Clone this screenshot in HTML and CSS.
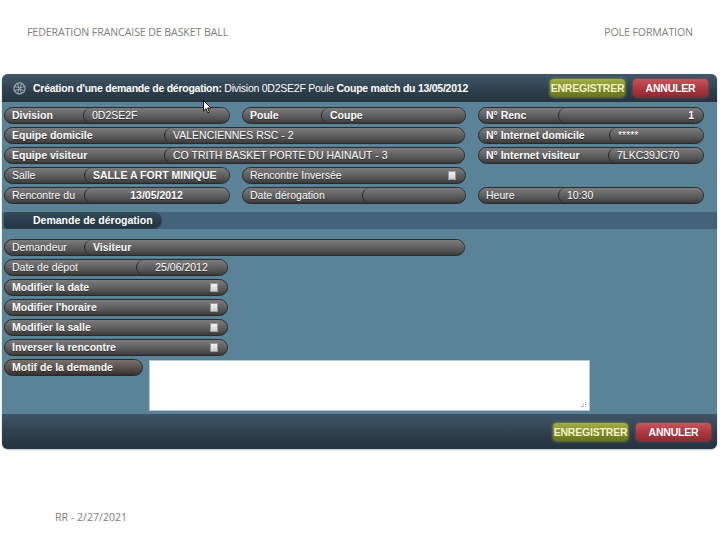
FILE: index.html
```html
<!DOCTYPE html>
<html lang="fr">
<head>
<meta charset="utf-8">
<title>Création d'une demande de dérogation</title>
<link rel="stylesheet" href="styles.css">
</head>
<body>
<div class="slide">
  <div class="top">
    <span>FEDERATION FRANCAISE DE BASKET BALL</span>
    <span>POLE FORMATION</span>
  </div>

  <div class="panel">
    <div class="phead">
      <svg class="logo" width="13" height="13" viewBox="0 0 13 13">
        <circle cx="6.5" cy="6.5" r="5.6" fill="none" stroke="#a9b3ba" stroke-width="1.1"/>
        <path d="M1.5 4.5 Q6.5 7 11.5 4.5 M1.5 8.5 Q6.5 6 11.5 8.5 M4.5 1.3 Q7.5 6.5 4.5 11.7 M8.5 1.3 Q5.5 6.5 8.5 11.7" fill="none" stroke="#a9b3ba" stroke-width="0.9"/>
      </svg>
      <div class="title"><b>Création d'une demande de dérogation:</b> Division 0D2SE2F Poule <b>Coupe match du 13/05/2012</b></div>
      <div class="btns">
        <span class="btn ok">ENREGISTRER</span>
        <span class="btn no">ANNULER</span>
      </div>
    </div>

    <svg class="cursor" width="10" height="14" viewBox="0 0 10 14">
      <path d="M0.5 0.5 L0.5 11 L3 8.6 L4.8 12.8 L6.4 12.1 L4.6 8 L8 8 Z" fill="#fff" stroke="#111" stroke-width="1"/>
    </svg>

    <div class="pbody">
      <div class="grid">
        <div class="pill c1"><span class="lab b w78">Division</span><span class="val">0D2SE2F</span></div>
        <div class="pill c2"><span class="lab b w78">Poule</span><span class="val b">Coupe</span></div>
        <div class="pill c3"><span class="lab b w79">N° Renc</span><span class="val b right">1</span></div>

        <div class="pill span"><span class="lab b w159">Equipe domicile</span><span class="val">VALENCIENNES RSC - 2</span></div>
        <div class="pill c3"><span class="lab b w130">N° Internet domicile</span><span class="val">*****</span></div>

        <div class="pill span"><span class="lab b w159">Equipe visiteur</span><span class="val">CO TRITH BASKET PORTE DU HAINAUT - 3</span></div>
        <div class="pill c3"><span class="lab b w129">N° Internet visiteur</span><span class="val">7LKC39JC70</span></div>

        <div class="pill c1"><span class="lab w79">Salle</span><span class="val b">SALLE A FORT MINIQUE</span></div>
        <div class="pill c2"><span class="lab">Rencontre Inversée</span><span class="chk"></span></div>
        <div class="empty"></div>

        <div class="pill c1"><span class="lab w79">Rencontre du</span><span class="val b center">13/05/2012</span></div>
        <div class="pill c2"><span class="lab w119">Date dérogation</span><span class="val"></span></div>
        <div class="pill c3"><span class="lab w79">Heure</span><span class="val">10:30</span></div>
      </div>

      <div class="section"><span class="tab">Demande de dérogation</span></div>

      <div class="rows">
        <div class="pill wide"><span class="lab w79">Demandeur</span><span class="val b">Visiteur</span></div>
        <div class="pill short"><span class="lab w131">Date de dépot</span><span class="val center">25/06/2012</span></div>
        <div class="pill short"><span class="lab b">Modifier la date</span><span class="chk"></span></div>
        <div class="pill short"><span class="lab b">Modifier l'horaire</span><span class="chk"></span></div>
        <div class="pill short"><span class="lab b">Modifier la salle</span><span class="chk"></span></div>
        <div class="pill short"><span class="lab b">Inverser la rencontre</span><span class="chk"></span></div>
        <div class="motif">
          <div class="pill mini"><span class="lab b">Motif de la demande</span></div>
          <div class="ta">
            <svg class="grip" width="6" height="6" viewBox="0 0 6 6">
              <rect x="4" y="0" width="1" height="1" fill="#999"/>
              <rect x="2" y="2" width="1" height="1" fill="#999"/>
              <rect x="4" y="2" width="1" height="1" fill="#999"/>
              <rect x="0" y="4" width="1" height="1" fill="#999"/>
              <rect x="2" y="4" width="1" height="1" fill="#999"/>
              <rect x="4" y="4" width="1" height="1" fill="#999"/>
            </svg>
          </div>
        </div>
      </div>
    </div>

    <div class="pfoot">
      <span class="btn ok">ENREGISTRER</span>
      <span class="btn no">ANNULER</span>
    </div>
  </div>

  <div class="note">RR - 2/27/2021</div>
</div>
</body>
</html>
```

FILE: styles.css
```css
html, body {
  margin: 0;
  padding: 0;
  background: #ffffff;
}

.slide {
  width: 720px;
  height: 540px;
  overflow: hidden;
}

.top {
  box-sizing: border-box;
  height: 74px;
  display: flex;
  justify-content: space-between;
  padding: 25px 27px 0 27px;
  font-family: "Open Sans", "Liberation Sans", sans-serif;
  font-size: 10.6px;
  color: #808080;
  letter-spacing: -0.1px;
}

.note {
  margin: 61px 0 0 55px;
  font-family: "Open Sans", "Liberation Sans", sans-serif;
  font-size: 10.6px;
  color: #808080;
}

.panel {
  position: relative;
  width: 715px;
  margin-left: 2px;
  background: #5b8398;
  border-radius: 6px;
  box-shadow: 0 1px 2px rgba(0, 0, 0, 0.25);
  font-family: "Liberation Sans", Arial, sans-serif;
  font-size: 10.5px;
  color: #ffffff;
}

.phead {
  height: 28px;
  display: flex;
  align-items: center;
  padding: 0 9px 0 11px;
  background: linear-gradient(#41596a, #2d3e4b 60%, #263540);
  border-radius: 6px 6px 0 0;
}

.logo {
  flex: none;
  margin-right: 7px;
}

.title {
  flex: 1;
  white-space: nowrap;
  font-size: 10.5px;
  letter-spacing: -0.25px;
}

.title b {
  font-weight: bold;
}

.btns {
  display: flex;
  gap: 8px;
}

.btn {
  box-sizing: border-box;
  width: 75px;
  height: 18px;
  line-height: 18px;
  text-align: center;
  border-radius: 4px;
  font-weight: bold;
  font-size: 10.5px;
  letter-spacing: -0.2px;
}

.btn.ok {
  background: linear-gradient(#a2b046, #7d8b2c 55%, #66741e);
  color: #f2f3c4;
  box-shadow: 0 0 3px #9fae3e;
}

.btn.no {
  background: linear-gradient(#c8555c, #a9373f 55%, #8e2a32);
  color: #ffffff;
  box-shadow: 0 0 3px #b8444c;
}

.cursor {
  position: absolute;
  left: 201px;
  top: 26px;
}

.pbody {
  padding: 5px 2px 3px 2px;
}

.grid {
  display: grid;
  grid-template-columns: 226px 224px 226px;
  column-gap: 12px;
  row-gap: 3px;
}

.pill {
  box-sizing: border-box;
  height: 17px;
  display: flex;
  align-items: stretch;
  border: 1px solid #2a2a2a;
  border-radius: 9px;
  background: linear-gradient(#7d7d7d, #626262 45%, #505050 75%, #383838);
  overflow: hidden;
  white-space: nowrap;
}

.pill.span {
  grid-column: 1 / span 2;
  margin-right: 1px;
}

.lab {
  flex: none;
  box-sizing: border-box;
  padding-left: 7px;
  line-height: 15px;
  text-shadow: 0 1px 0 rgba(0, 0, 0, 0.45);
}

.b {
  font-weight: bold;
}

.w78 { width: 78px; }
.w79 { width: 79px; }
.w119 { width: 119px; }
.w129 { width: 129px; }
.w130 { width: 130px; }
.w131 { width: 131px; }
.w159 { width: 159px; }

.val {
  flex: 1;
  min-width: 0;
  padding: 0 9px 0 8px;
  line-height: 15px;
  border-left: 1px solid #262626;
  border-radius: 8px 0 0 8px;
  background: linear-gradient(#7d7d7d, #626262 45%, #505050 75%, #383838);
  text-shadow: 0 1px 0 rgba(0, 0, 0, 0.45);
}

.val.right {
  text-align: right;
}

.val.center {
  text-align: center;
}

.chk {
  flex: none;
  align-self: center;
  width: 8px;
  height: 9px;
  margin-left: auto;
  margin-right: 9px;
  background: linear-gradient(#f2f2f2, #cfcfcf);
  border: 1px solid #9a9a9a;
  box-sizing: border-box;
}

.section {
  height: 17px;
  margin: 8px -2px 10px -2px;
  background: #426379;
  display: flex;
}

.tab {
  box-sizing: border-box;
  width: 158px;
  height: 16px;
  margin-left: 2px;
  padding-left: 29px;
  line-height: 16px;
  font-weight: bold;
  border-radius: 4px 9px 9px 4px;
  background: linear-gradient(#34495a, #24343f);
  box-shadow: 0 1px 0 rgba(0, 0, 0, 0.35);
}

.rows {
  display: flex;
  flex-direction: column;
  gap: 3px;
}

.pill.wide {
  width: 461px;
}

.pill.short {
  width: 224px;
}

.motif {
  display: flex;
  gap: 6px;
  align-items: flex-start;
}

.pill.mini {
  width: 139px;
  background: linear-gradient(#7a716d, #5a524e 50%, #473f3c 80%, #342e2b);
}

.ta {
  position: relative;
  box-sizing: border-box;
  width: 441px;
  height: 51px;
  margin-top: 1px;
  background: #ffffff;
  border: 1px solid #b7c6cf;
}

.grip {
  position: absolute;
  right: 2px;
  bottom: 2px;
}

.pfoot {
  height: 35px;
  display: flex;
  justify-content: flex-end;
  align-items: flex-start;
  gap: 8px;
  padding: 9px 6px 0 0;
  box-sizing: border-box;
  background: linear-gradient(#3e5566, #2d3e4b 60%, #25343f);
  border-radius: 0 0 6px 6px;
}
```
